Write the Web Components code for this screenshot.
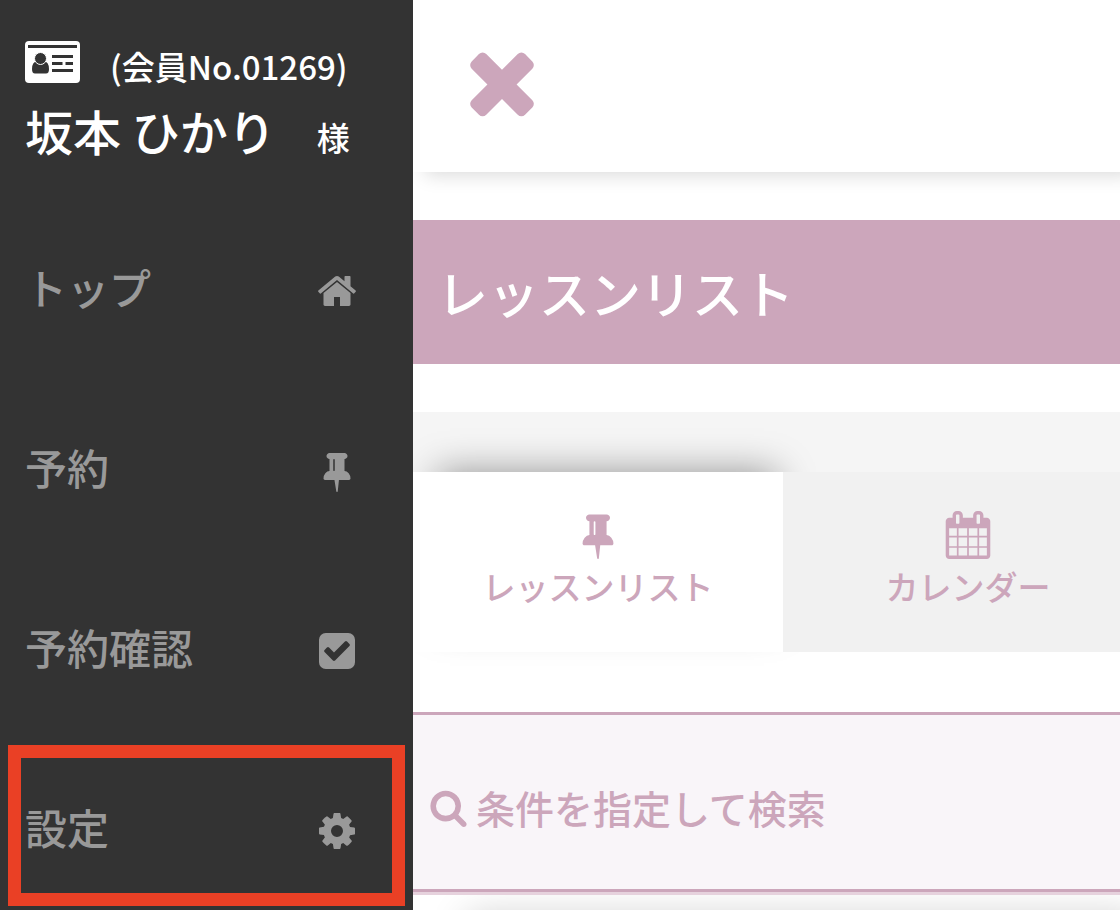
<!DOCTYPE html>
<html lang="ja">
<head>
<meta charset="utf-8">
<meta name="viewport" content="width=device-width, initial-scale=1">
<title>レッスンリスト</title>
<style>
  :root {
    --color-primary: #cca6bb;
    --color-primary-light: #e6d2dd;
    --color-primary-pale: #f9f5f9;
    --color-menu: #333333;
    --color-menu-text: #999999;
    --color-highlight: #ea4025;
    --font-size-sm: 33px;
    --font-size-md: 39px;
    --font-size-menu: 42px;
    --font-size-lg: 48px;
    --font-size-title: 51px;
  }
  body {
    margin: 0;
    background: #ffffff;
    font-family: "Noto Sans CJK JP", "Noto Sans", sans-serif;
    font-weight: 500;
  }
</style>
</head>
<body>
<app-layout>
  <side-menu slot="menu">
    <member-card slot="member" number="01269" name="坂本 ひかり"></member-card>
    <menu-item icon="home">トップ</menu-item>
    <menu-item icon="pin">予約</menu-item>
    <menu-item icon="check">予約確認</menu-item>
    <menu-item icon="cog" highlighted>設定</menu-item>
  </side-menu>
  <top-bar></top-bar>
  <page-title>レッスンリスト</page-title>
  <tab-bar>
    <tab-item icon="pin" active>レッスンリスト</tab-item>
    <tab-item icon="calendar">カレンダー</tab-item>
  </tab-bar>
  <search-toggle>条件を指定して検索</search-toggle>
  <lesson-panel></lesson-panel>
</app-layout>

<script>
const ICONS = {
  home: "M1472 992v480q0 26-19 45t-45 19h-384v-384h-256v384h-384q-26 0-45-19t-19-45v-480q0-1 .5-3t.5-3l575-474 575 474q1 2 1 6zm223-69l-62 74q-8 9-21 11h-3q-13 0-21-7l-692-577-692 577q-12 8-24 7-13-2-21-11l-62-74q-8-10-7-23.5t11-21.5l719-599q32-26 76-26t76 26l244 204v-195q0-14 9-23t23-9h192q14 0 23 9t9 23v408l219 182q10 8 11 21.5t-7 23.5z",
  pin: "M800 864v-448q0-14-9-23t-23-9-23 9-9 23v448q0 14 9 23t23 9 23-9 9-23zm672 352q0 26-19 45t-45 19h-429l-51 483q-2 12-10.5 20.5t-20.5 8.5h-1q-27 0-32-27l-76-485h-404q-26 0-45-19t-19-45q0-123 78.5-221.5t177.5-98.5v-512q-52 0-90-38t-38-90 38-90 90-38h640q52 0 90 38t38 90-38 90-90 38v512q99 0 177.5 98.5t78.5 221.5z",
  check: "M813 1299l614-614q19-19 19-45t-19-45l-102-102q-19-19-45-19t-45 19l-467 467-211-211q-19-19-45-19t-45 19l-102 102q-19 19-19 45t19 45l358 358q19 19 45 19t45-19zm851-883v960q0 119-84.5 203.5t-203.5 84.5h-960q-119 0-203.5-84.5t-84.5-203.5v-960q0-119 84.5-203.5t203.5-84.5h960q119 0 203.5 84.5t84.5 203.5z",
  cog: "M1152 896q0-106-75-181t-181-75-181 75-75 181 75 181 181 75 181-75 75-181zm512-109v222q0 12-8 23t-20 13l-185 28q-19 54-39 91 35 50 107 138 10 12 10 25t-9 23q-27 37-99 108t-94 71q-12 0-26-9l-138-108q-44 23-91 38-16 136-29 186-7 28-36 28h-222q-14 0-24.5-8.5t-11.5-21.5l-28-184q-49-16-90-37l-141 107q-10 9-25 9-14 0-25-11-126-114-165-168-7-10-7-23 0-12 8-23 15-21 51-66.5t54-70.5q-27-50-41-99l-183-27q-13-2-21-12.5t-8-23.5v-222q0-12 8-23t19-13l186-28q14-46 39-92-40-57-107-138-10-12-10-24 0-10 9-23 26-36 98.5-107.5t94.5-71.5q13 0 26 10l138 107q44-23 91-38 16-136 29-186 7-28 36-28h222q14 0 24.5 8.5t11.5 21.5l28 184q49 16 90 37l142-107q9-9 24-9 13 0 25 10 129 119 165 170 7 8 7 22 0 12-8 23-15 21-51 66.5t-54 70.5q26 50 41 98l183 28q13 2 21 12.5t8 23.5z",
  close: "M1490 1322q0 40-28 68l-136 136q-28 28-68 28t-68-28l-294-294-294 294q-28 28-68 28t-68-28l-136-136q-28-28-28-68t28-68l294-294-294-294q-28-28-28-68t28-68l136-136q28-28 68-28t68 28l294 294 294-294q28-28 68-28t68 28l136 136q28 28 28 68t-28 68l-294 294 294 294q28 28 28 68z",
  search: "M1216 832q0-185-131.5-316.5t-316.5-131.5-316.5 131.5-131.5 316.5 131.5 316.5 316.5 131.5 316.5-131.5 131.5-316.5zm512 832q0 52-38 90t-90 38q-54 0-90-38l-343-342q-179 124-399 124-143 0-273.5-55.5t-225-150-150-225-55.5-273.5 55.5-273.5 150-225 225-150 273.5-55.5 273.5 55.5 225 150 150 225 55.5 273.5q0 220-124 399l343 343q37 37 37 90z",
  calendar: "M192 1664h288v-288h-288v288zm352 0h320v-288h-320v288zm-352-352h288v-320h-288v320zm352 0h320v-320h-320v320zm-352-384h288v-288h-288v288zm736 736h320v-288h-320v288zm-384-736h320v-288h-320v288zm768 736h288v-288h-288v288zm-384-352h320v-320h-320v320zm-352-864v-288q0-13-9.5-22.5t-22.5-9.5h-64q-13 0-22.5 9.5t-9.5 22.5v288q0 13 9.5 22.5t22.5 9.5h64q13 0 22.5-9.5t9.5-22.5zm736 864h288v-320h-288v320zm-384-384h320v-288h-320v288zm384 0h288v-288h-288v288zm32-480v-288q0-13-9.5-22.5t-22.5-9.5h-64q-13 0-22.5 9.5t-9.5 22.5v288q0 13 9.5 22.5t22.5 9.5h64q13 0 22.5-9.5t9.5-22.5zm384-64v1280q0 52-38 90t-90 38h-1408q-52 0-90-38t-38-90v-1280q0-52 38-90t90-38h128v-96q0-66 47-113t113-47h64q66 0 113 47t47 113v96h384v-96q0-66 47-113t113-47h64q66 0 113 47t47 113v96h128q52 0 90 38t38 90z"
}

const icon = (name) => `
  <svg viewBox="0 0 1792 1792" aria-hidden="true"><path fill="currentColor" d="${ICONS[name]}"/></svg>
`

class AppLayout extends HTMLElement {
  constructor() {
    super()
    this.attachShadow({mode: "open"})
    this.shadowRoot.innerHTML = `
      <style>
        :host {
          display: flex;
          height: 100vh;
          overflow: hidden;
        }
        main {
          flex: 1;
          min-width: 0;
          overflow: hidden;
        }
      </style>
      <slot name="menu"></slot>
      <main><slot></slot></main>
    `
  }
}

class SideMenu extends HTMLElement {
  constructor() {
    super()
    this.attachShadow({mode: "open"})
    this.shadowRoot.innerHTML = `
      <style>
        :host {
          display: block;
          flex: 0 0 413px;
          overflow: hidden;
          background: var(--color-menu);
        }
      </style>
      <slot name="member"></slot>
      <nav aria-label="メニュー"><slot></slot></nav>
    `
  }
}

class MemberCard extends HTMLElement {
  constructor() {
    super()
    this.attachShadow({mode: "open"})
    this.shadowRoot.innerHTML = `
      <style>
        :host {
          display: block;
          box-sizing: border-box;
          height: 200px;
          padding: 36px 25px 0;
          color: #ffffff;
          font-size: var(--font-size-sm);
        }
        .row {
          display: flex;
          gap: 30px;
          line-height: 60px;
        }
        .name {
          gap: 41px;
          align-items: baseline;
          line-height: 68px;
        }
        .name strong {
          font-size: var(--font-size-lg);
          font-weight: inherit;
        }
        svg {
          width: 55px;
          height: 52px;
        }
      </style>
      <div class="row">
        <svg viewBox="0 0 55 52" aria-hidden="true">
          <rect y="5" width="55" height="42" rx="4" fill="#fff"/>
          <g fill="#333">
            <rect x="3" y="9" width="49" height="3"/>
            <path d="M7 33q0-7 5-8 3.500 2 7 0 5 1 5 8 0 4.500-3 4.500H10q-3 0-3-4.500z"/>
            <circle cx="15.500" cy="22.500" r="6" stroke="#fff"/>
            <path d="M27 19h21v3H27zM27 26h10.500v3H27zM40.500 26H48v3h-7.500zM27 33h21v3H27z"/>
          </g>
        </svg>
        <span>(会員No.${this.getAttribute("number")})</span>
      </div>
      <div class="row name">
        <strong>${this.getAttribute("name")}</strong>
        <span>様</span>
      </div>
    `
  }
}

class MenuItem extends HTMLElement {
  constructor() {
    super()
    this.attachShadow({mode: "open"})
    this.shadowRoot.innerHTML = `
      <style>
        :host {
          display: block;
          position: relative;
        }
        a {
          display: flex;
          align-items: center;
          justify-content: space-between;
          box-sizing: border-box;
          height: 180px;
          padding: 2px 55px 0 25px;
          color: var(--color-menu-text);
          font-size: var(--font-size-menu);
          line-height: 60px;
          text-decoration: none;
        }
        span {
          padding-bottom: 8px;
        }
        svg {
          width: 42px;
          height: 42px;
        }
        /* Red frame around the item */
        :host([highlighted])::after {
          content: "";
          position: absolute;
          inset: 5px 8px 14px;
          border: 13px solid var(--color-highlight);
          pointer-events: none;
        }
      </style>
      <a href="#"><span><slot></slot></span>${icon(this.getAttribute("icon"))}</a>
    `
  }
}

class TopBar extends HTMLElement {
  constructor() {
    super()
    this.attachShadow({mode: "open"})
    this.shadowRoot.innerHTML = `
      <style>
        :host {
          display: flex;
          align-items: center;
          height: 172px;
          margin-bottom: 48px;
          padding: 0 41px;
          box-sizing: border-box;
          box-shadow: 12px 3px 18px rgba(0, 0, 0, 0.15);
        }
        button {
          display: block;
          padding: 0 0 10px;
          border: none;
          background: none;
          color: var(--color-primary);
          cursor: pointer;
        }
        svg {
          display: block;
          width: 96px;
          height: 96px;
        }
      </style>
      <button type="button" aria-label="メニューを閉じる">${icon("close")}</button>
    `
  }
}

class PageTitle extends HTMLElement {
  constructor() {
    super()
    this.attachShadow({mode: "open"})
    this.shadowRoot.innerHTML = `
      <style>
        :host {
          display: block;
          margin-bottom: 48px;
          padding: 36px 24px;
          background: var(--color-primary);
        }
        h1 {
          margin: 0;
          color: #ffffff;
          font-size: var(--font-size-title);
          font-weight: 500;
          line-height: 72px;
          white-space: nowrap;
        }
      </style>
      <h1><slot></slot></h1>
    `
  }
}

class TabBar extends HTMLElement {
  constructor() {
    super()
    this.attachShadow({mode: "open"})
    this.shadowRoot.innerHTML = `
      <style>
        :host {
          display: block;
          margin-bottom: 60px;
          padding-top: 60px;
          background: #f5f5f5;
        }
        div {
          display: flex;
        }
      </style>
      <div role="tablist"><slot></slot></div>
    `
  }
}

class TabItem extends HTMLElement {
  constructor() {
    super()
    this.attachShadow({mode: "open"})
    this.shadowRoot.innerHTML = `
      <style>
        :host {
          display: block;
          position: relative;
          flex: 0 0 370px;
        }
        button {
          display: flex;
          flex-direction: column;
          align-items: center;
          width: 100%;
          height: 180px;
          padding: 39px 0 0;
          border: none;
          background: #f1f1f1;
          color: var(--color-primary);
          font: inherit;
          font-size: var(--font-size-sm);
          line-height: 54px;
          cursor: pointer;
        }
        :host([active]) button {
          background: #ffffff;
          box-shadow: 9px -15px 36px -15px rgba(0, 0, 0, 0.4);
        }
        svg {
          flex: none;
          width: 48px;
          height: 48px;
        }
      </style>
      <button type="button" role="tab" aria-selected="${this.hasAttribute("active")}">
        ${icon(this.getAttribute("icon"))}
        <span><slot></slot></span>
      </button>
    `
  }
}

class SearchToggle extends HTMLElement {
  constructor() {
    super()
    this.attachShadow({mode: "open"})
    this.shadowRoot.innerHTML = `
      <style>
        :host {
          display: block;
          position: relative;
          z-index: 1;
        }
        button {
          display: flex;
          align-items: center;
          gap: 8px;
          width: 100%;
          height: 180px;
          padding: 10px 16px 0;
          border: solid var(--color-primary);
          border-width: 3px 0;
          background: var(--color-primary-pale);
          box-shadow: 0 3px 0 var(--color-primary-light);
          color: var(--color-primary);
          font: inherit;
          font-size: var(--font-size-md);
          line-height: 60px;
          text-align: left;
          white-space: nowrap;
          cursor: pointer;
        }
        svg {
          flex: none;
          width: 39px;
          height: 39px;
        }
      </style>
      <button type="button" aria-expanded="false">
        ${icon("search")}
        <span><slot></slot></span>
      </button>
    `
  }
}

class LessonPanel extends HTMLElement {
  constructor() {
    super()
    this.attachShadow({mode: "open"})
    this.shadowRoot.innerHTML = `
      <style>
        :host {
          display: block;
          height: 180px;
          margin: 24px 0 0 36px;
          background: #ffffff;
          box-shadow: 18px 0 36px rgba(0, 0, 0, 0.2);
        }
      </style>
      <slot></slot>
    `
  }
}

customElements.define("app-layout", AppLayout)
customElements.define("side-menu", SideMenu)
customElements.define("member-card", MemberCard)
customElements.define("menu-item", MenuItem)
customElements.define("top-bar", TopBar)
customElements.define("page-title", PageTitle)
customElements.define("tab-bar", TabBar)
customElements.define("tab-item", TabItem)
customElements.define("search-toggle", SearchToggle)
customElements.define("lesson-panel", LessonPanel)
</script>
</body>
</html>
